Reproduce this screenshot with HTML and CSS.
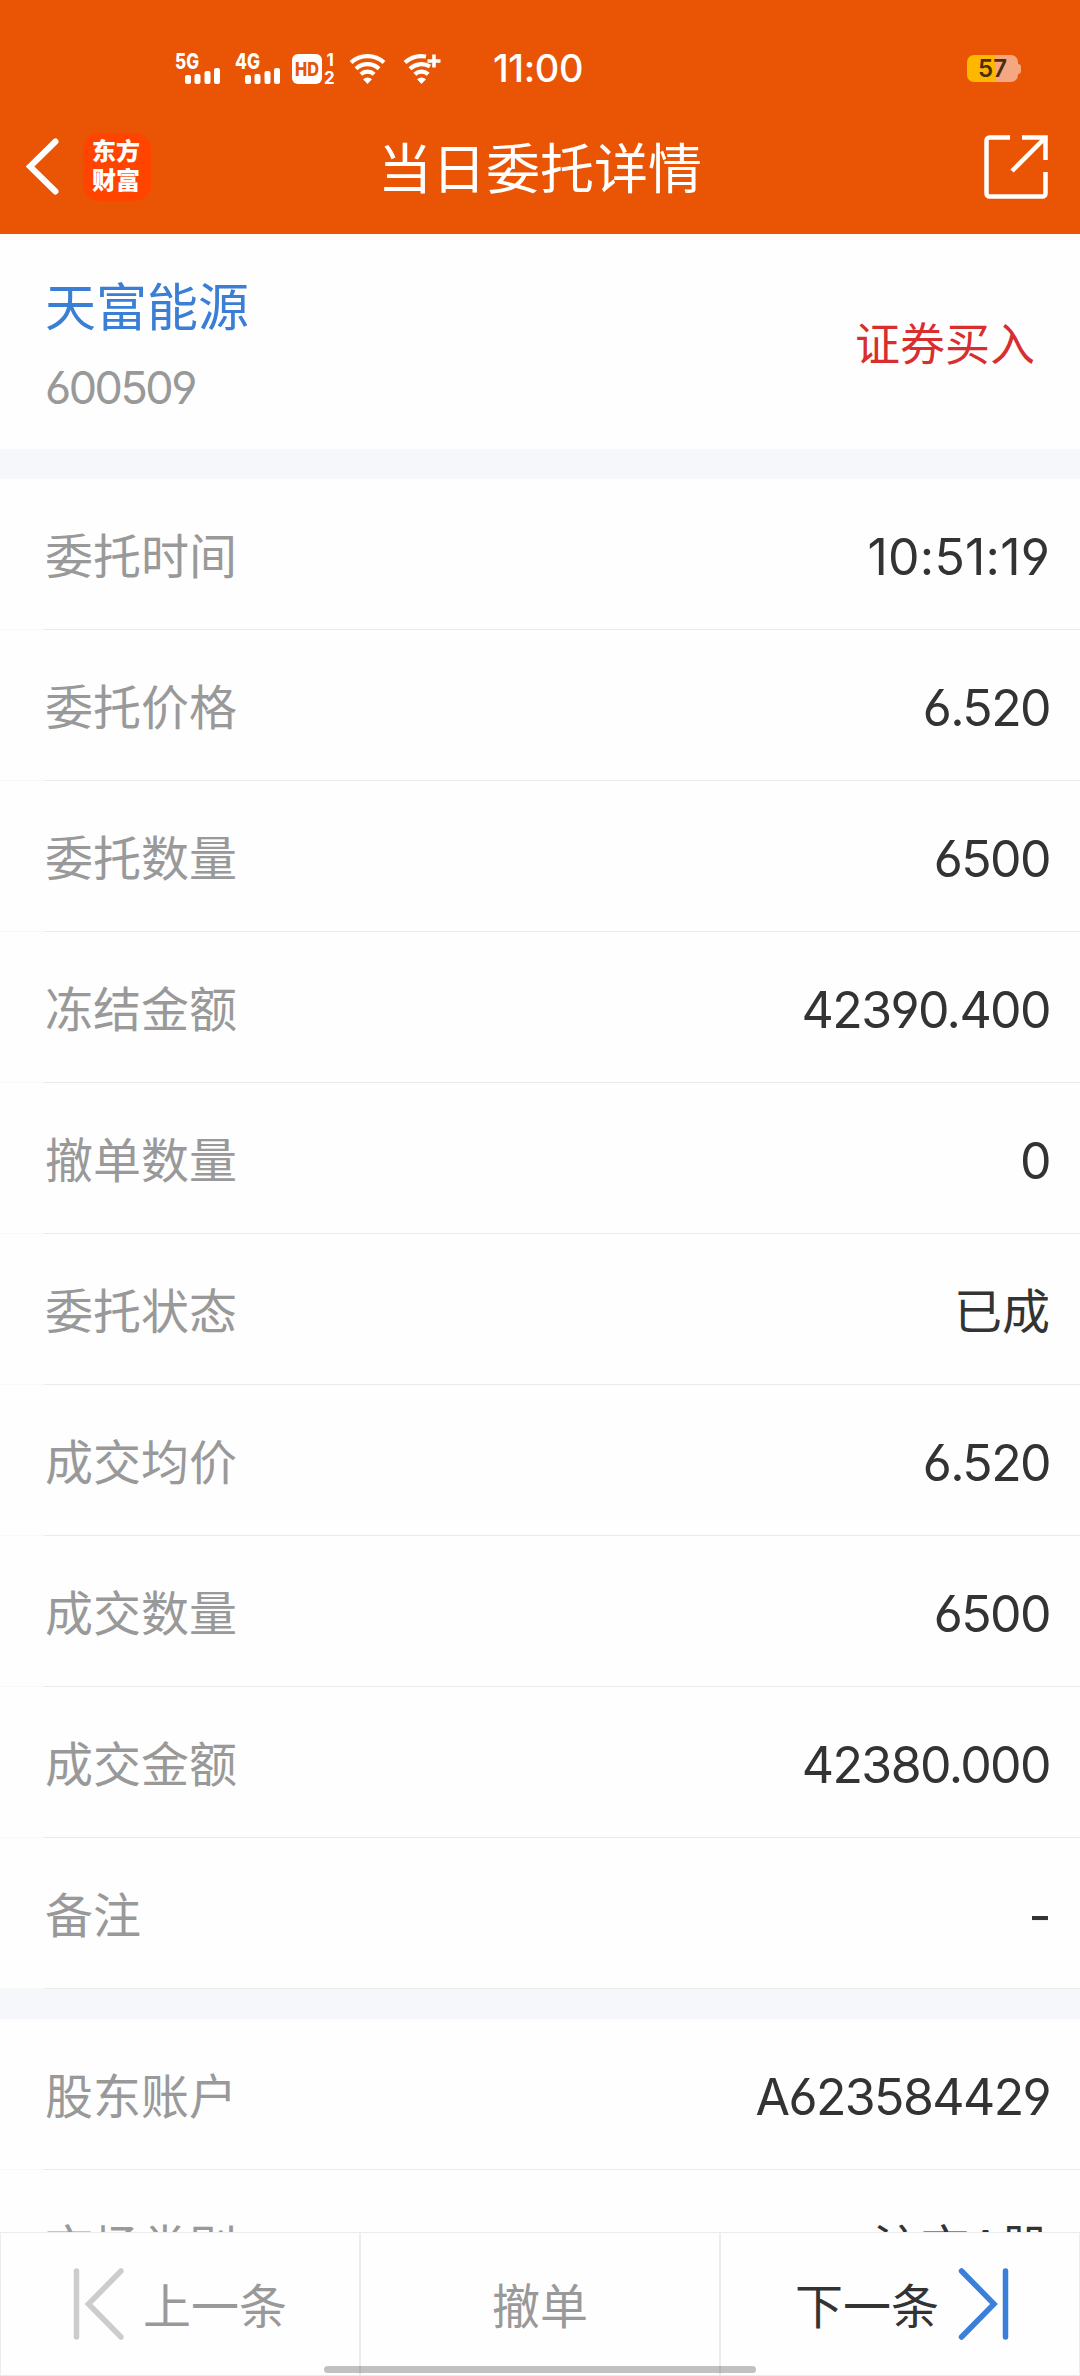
FILE: index.html
```
<!DOCTYPE html>
<html lang="zh-CN">

<head>
    <meta charset="UTF-8">
    <meta name="viewport" content="width=device-width, initial-scale=1.0">
    <title>当日委托详情</title>
    <link rel="stylesheet" href="styles.css">
</head>

<body>
    <header class="header">
        <div class="status-bar">
            <svg class="status-icons" width="270" height="36" viewBox="0 0 270 36" fill="#fff">
                <text x="4" y="18" class="net-text" textLength="24" lengthAdjust="spacingAndGlyphs">5G</text>
                <rect x="14" y="24" width="6" height="9" rx="2" />
                <rect x="23.500" y="23" width="6" height="10" rx="2" />
                <rect x="33.500" y="20" width="6" height="13" rx="2" />
                <rect x="43" y="17" width="6" height="16" rx="2" />
                <text x="64" y="18" class="net-text" textLength="25" lengthAdjust="spacingAndGlyphs">4G</text>
                <rect x="74" y="24" width="6" height="9" rx="2" />
                <rect x="83.500" y="23" width="6" height="10" rx="2" />
                <rect x="93.500" y="20" width="6" height="13" rx="2" />
                <rect x="103" y="17" width="6" height="16" rx="2" />
                <rect x="121" y="3" width="30" height="30" rx="6" />
                <text x="124" y="25" class="hd-text" textLength="24" lengthAdjust="spacingAndGlyphs">HD</text>
                <text x="155.500" y="15" class="sim-text">1</text>
                <text x="153" y="33" class="sim-text">2</text>
                <g fill="none" stroke="#fff" stroke-width="4.200">
                    <path d="M180 11.500a24.500 24.500 0 0 1 33 0" />
                    <path d="M185 17.700a17 17 0 0 1 23 0" />
                    <path d="M189.800 23.200a10 10 0 0 1 13.400 0" />
                    <path d="M192 28.200a7 7 0 0 1 9 0L196.500 33z" fill="#fff" stroke="none" />
                </g>
                <g fill="none" stroke="#fff" stroke-width="4.200">
                    <path d="M234 11.500a24.500 24.500 0 0 1 21 -6" />
                    <path d="M239 17.700a17 17 0 0 1 20 -2.200" />
                    <path d="M243.800 23.200a10 10 0 0 1 13.400 0" />
                    <path d="M246 28.200a7 7 0 0 1 9 0L250.500 33z" fill="#fff" stroke="none" />
                    <path d="M263 3.500v13M256.500 10h13" stroke-width="3.600" />
                </g>
            </svg>
            <span class="time">11:00</span>
            <div class="battery"><span class="battery-body">57</span><span class="battery-tip"></span></div>
        </div>
        <div class="nav">
            <div class="nav-left">
                <svg width="36" height="60" viewBox="0 0 36 60" fill="none" stroke="#fff" stroke-width="6" stroke-linecap="round">
                    <path d="M31.500 4.500L6 29.500l25.500 25" />
                </svg>
                <div class="logo">东方<br>财富</div>
            </div>
            <h1 class="title">当日委托详情</h1>
            <svg class="share" width="64" height="64" viewBox="0 0 64 64" fill="none" stroke="#fff" stroke-width="4.500">
                <path d="M26 2.500H5.500a3 3 0 0 0-3 3v53a3 3 0 0 0 3 3h53a3 3 0 0 0 3-3V37" />
                <path d="M38 2.500h23.500V25M60.500 3.500L28 36" />
            </svg>
        </div>
    </header>

    <main class="content">
        <section class="stock">
            <div class="stock-info">
                <div class="stock-name">天富能源</div>
                <div class="stock-code">600509</div>
            </div>
            <div class="trade-type">证券买入</div>
        </section>

        <section class="group">
            <div class="row"><span class="label">委托时间</span><span class="value time-value">10:51:19</span></div>
            <div class="row"><span class="label">委托价格</span><span class="value">6.520</span></div>
            <div class="row"><span class="label">委托数量</span><span class="value">6500</span></div>
            <div class="row"><span class="label">冻结金额</span><span class="value">42390.400</span></div>
            <div class="row"><span class="label">撤单数量</span><span class="value">0</span></div>
            <div class="row"><span class="label">委托状态</span><span class="value cn">已成</span></div>
            <div class="row"><span class="label">成交均价</span><span class="value">6.520</span></div>
            <div class="row"><span class="label">成交数量</span><span class="value">6500</span></div>
            <div class="row"><span class="label">成交金额</span><span class="value">42380.000</span></div>
            <div class="row"><span class="label">备注</span><span class="value">-</span></div>
        </section>

        <section class="group">
            <div class="row"><span class="label">股东账户</span><span class="value">A623584429</span></div>
            <div class="row"><span class="label">市场类别</span><span class="value cn">沪市A股</span></div>
        </section>
    </main>

    <footer class="footer">
        <div class="footer-button">
            <svg width="52" height="72" viewBox="0 0 52 72" fill="none" stroke="#ccc" stroke-width="5.500" stroke-linecap="round">
                <path d="M3.500 3v66M48 3L15.500 36 48 69" />
            </svg>
            <span class="text">上一条</span>
        </div>
        <div class="footer-button"><span class="text">撤单</span></div>
        <div class="footer-button active">
            <span class="text">下一条</span>
            <svg width="52" height="72" viewBox="0 0 52 72" fill="none" stroke="#3a7fd9" stroke-width="5.500" stroke-linecap="round">
                <path d="M48.500 3v66M4.500 3L37 36 4.500 69" />
            </svg>
        </div>
        <div class="home-bar"></div>
    </footer>
</body>

</html>
```
FILE: styles.css
```
* {
    box-sizing: border-box;
}

body {
    display: flex;
    flex-direction: column;
    height: 2376px;
    margin: 0;
    overflow: hidden;
    background-color: #fefefe;
    color: #333;
    font-family: Inter, "Noto Sans CJK SC", sans-serif;
    font-size: 48px;
}

.header {
    flex: none;
    height: 234px;
    background-color: #e95504;
    color: #fff;
}

.status-bar {
    display: flex;
    align-items: center;
    height: 102px;
    padding: 36px 59px 0 171px;
}

.status-icons {
    overflow: visible;
}

.net-text {
    font-size: 21px;
    font-weight: 800;
}

.hd-text {
    font-size: 19px;
    font-weight: 800;
    fill: #e95504;
}

.sim-text {
    font-size: 17px;
    font-weight: 700;
}

.time {
    width: 100px;
    margin-left: 52px;
    padding-bottom: 2px;
    font-size: 38px;
    font-weight: 500;
    letter-spacing: -0.4px;
}

.battery {
    display: flex;
    align-items: center;
    margin-left: auto;
    padding-bottom: 1px;
}

.battery-body {
    width: 51px;
    height: 27px;
    border-radius: 7px;
    background: linear-gradient(to right, #ffb800 57%, #f4a780 57%);
    color: #4d2c0e;
    font-size: 24px;
    font-weight: 600;
    line-height: 28px;
    text-align: center;
}

.battery-tip {
    width: 3px;
    height: 10px;
    border-radius: 0 3px 3px 0;
    background-color: #f4a780;
}

.nav {
    display: grid;
    grid-template-columns: 1fr auto 1fr;
    align-items: center;
    height: 130px;
    padding: 0 32px 0 24px;
}

.nav-left {
    display: flex;
    align-items: center;
    gap: 23px;
}

.logo {
    width: 68px;
    height: 68px;
    padding: 4px 2px 0 0;
    border-radius: 16px;
    background-color: #ff4400;
    font-size: 24px;
    font-weight: 900;
    line-height: 29px;
    text-align: center;
}

.title {
    margin: 0;
    padding: 0 0 3px 8px;
    font-size: 54px;
    font-weight: 400;
}

.share {
    justify-self: end;
}

.content {
    flex: 1;
    min-height: 0;
    overflow: hidden;
}

.stock {
    display: flex;
    justify-content: space-between;
    align-items: center;
    height: 215px;
    padding: 0 45px;
}

.stock-info {
    padding-top: 12px;
}

.stock-name {
    color: #3a7fd5;
    font-size: 51px;
    line-height: 76px;
}

.stock-code {
    margin-top: 4px;
    color: #999;
    font-size: 45px;
    line-height: 76px;
    letter-spacing: -2.5px;
    font-feature-settings: "cv03", "cv04";
}

.trade-type {
    color: #d92e2e;
    font-size: 45px;
}

.group {
    border-top: 30px solid #f6f7fa;
}

.row {
    display: flex;
    justify-content: space-between;
    align-items: center;
    height: 151px;
    padding: 0 30px 0 45px;
    border-bottom: 1px solid;
    border-image: linear-gradient(to right, #f8f8f8 45px, #eaeaea 45px) 1;
}

.label {
    padding-bottom: 3px;
    color: #999;
}

.value {
    padding-top: 5px;
    font-size: 50px;
    letter-spacing: -1.6px;
    font-feature-settings: "cv03", "cv04";
}

.time-value {
    letter-spacing: 0.2px;
}

.value.cn {
    padding: 0 0 3px;
    font-size: 48px;
    letter-spacing: 0;
}

.footer {
    position: relative;
    display: grid;
    grid-template-columns: repeat(3, 1fr);
    flex: none;
    height: 144px;
    background-color: #fefefe;
}

.footer-button {
    display: flex;
    justify-content: center;
    align-items: center;
    gap: 18px;
    border: 1px solid #ececec;
    color: #999;
}

.footer-button .text {
    padding-bottom: 3px;
}

.footer-button.active {
    padding-left: 4px;
    color: #333;
}

/* system gesture bar, sits on top of the buttons */
.home-bar {
    position: absolute;
    bottom: 3px;
    left: 324px;
    width: 432px;
    height: 7px;
    border-radius: 4px;
    background-color: rgba(0, 0, 0, 0.24);
}
```
